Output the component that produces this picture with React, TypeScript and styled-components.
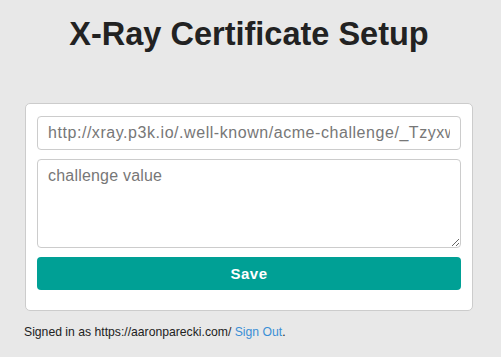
import styled, { createGlobalStyle } from "styled-components";

const GlobalStyle = createGlobalStyle`
    html, body {
        margin: 0;
        padding: 0;
        background-color: #e8e8e8;
        font-family: "Liberation Sans", Arial, sans-serif;
        color: #222;
    }
`;

const Page = styled.main`
    width: 501px;
    min-height: 357px;
    box-sizing: border-box;
    padding: 16px 24px 0 25px;
`;

const Title = styled.h1`
    margin: 0 0 50px;
    padding-right: 4px;
    text-align: center;
    font-size: 32.5px;
    font-weight: bold;
    line-height: 37px;
    color: #222;
`;

const Card = styled.form`
    display: flex;
    flex-direction: column;
    gap: 9px;
    width: 448px;
    box-sizing: border-box;
    padding: 12px 11px 20px;
    background-color: #fff;
    border: 1px solid #ccc;
    border-radius: 5px;
`;

const fieldStyle = `
    box-sizing: border-box;
    width: 100%;
    margin: 0;
    padding: 6px 10px;
    border: 1px solid #ccc;
    border-radius: 4px;
    font-family: "Liberation Sans", Arial, sans-serif;
    font-size: 16px;
    color: #777;
    background: #fff;
    &::placeholder {
        color: #777;
        letter-spacing: 0.2px;
    }
`;

const TextInput = styled.input`
    ${fieldStyle}
    height: 34px;
    letter-spacing: 0.55px;
`;

const TextArea = styled.textarea`
    ${fieldStyle}
    height: 89px;
    padding-top: 7px;
    resize: vertical;
`;

const SaveButton = styled.button`
    height: 33px;
    border: none;
    border-radius: 4px;
    background-color: #00a095;
    color: #fff;
    font-family: "Liberation Sans", Arial, sans-serif;
    font-size: 15px;
    font-weight: bold;
    letter-spacing: 0.5px;
    cursor: pointer;
`;

const Footer = styled.p`
    margin: 14px 0 0 -1px;
    font-size: 12.2px;
    color: #222;
    a {
        color: #3a8fd6;
        text-decoration: none;
    }
`;

const App = () => {
    return (
        <>
            <GlobalStyle />
            <Page>
                <Title>X-Ray Certificate Setup</Title>
                <Card onSubmit={(e) => e.preventDefault()}>
                    <TextInput
                        type="text"
                        defaultValue="http://xray.p3k.io/.well-known/acme-challenge/_TzyxwQ"
                    />
                    <TextArea placeholder="challenge value" />
                    <SaveButton type="submit">Save</SaveButton>
                </Card>
                <Footer>
                    Signed in as https://aaronparecki.com/ <a href="#">Sign Out</a>.
                </Footer>
            </Page>
        </>
    );
};

export default App;
